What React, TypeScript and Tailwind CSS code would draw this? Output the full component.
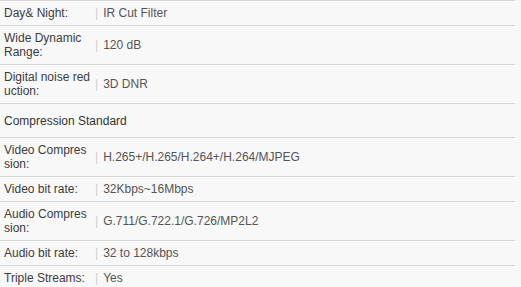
import React from "react";

type Row = { label: string; value?: string; header?: boolean };

const rows: Row[] = [
  { label: "Day& Night:", value: "IR Cut Filter" },
  { label: "Wide Dynamic Range:", value: "120 dB" },
  { label: "Digital noise reduction:", value: "3D DNR" },
  { label: "Compression Standard", header: true },
  { label: "Video Compression:", value: "H.265+/H.265/H.264+/H.264/MJPEG" },
  { label: "Video bit rate:", value: "32Kbps~16Mbps" },
  { label: "Audio Compression:", value: "G.711/G.722.1/G.726/MP2L2" },
  { label: "Audio bit rate:", value: "32 to 128kbps" },
  { label: "Triple Streams:", value: "Yes" },
];

export default function App() {
  return (
    <div
      className="w-[521px] h-[287px] overflow-hidden bg-[#f8f8f8] text-[12px] leading-[14px]"
      style={{ fontFamily: '"Liberation Sans", Arial, sans-serif' }}
    >
      <div className="w-[515px]">
        {rows.map((r, i) =>
          r.header ? (
            <div
              key={i}
              className="border-t border-[#d8d8d8] pl-[4px] pt-[10px] pb-[9px] text-[#333]"
            >
              {r.label}
            </div>
          ) : (
            <div
              key={i}
              className="flex items-center border-t border-[#d8d8d8] py-[5px]"
            >
              <div className="w-[87px] ml-[4px] break-all text-[#3c3c3c] shrink-0">
                {r.label}
              </div>
              <span className="ml-[4px] text-[#cfcfcf]">|</span>
              <div className="ml-[5px] text-[#555]">{r.value}</div>
            </div>
          )
        )}
        <div className="border-t border-[#d8d8d8]" />
      </div>
    </div>
  );
}
